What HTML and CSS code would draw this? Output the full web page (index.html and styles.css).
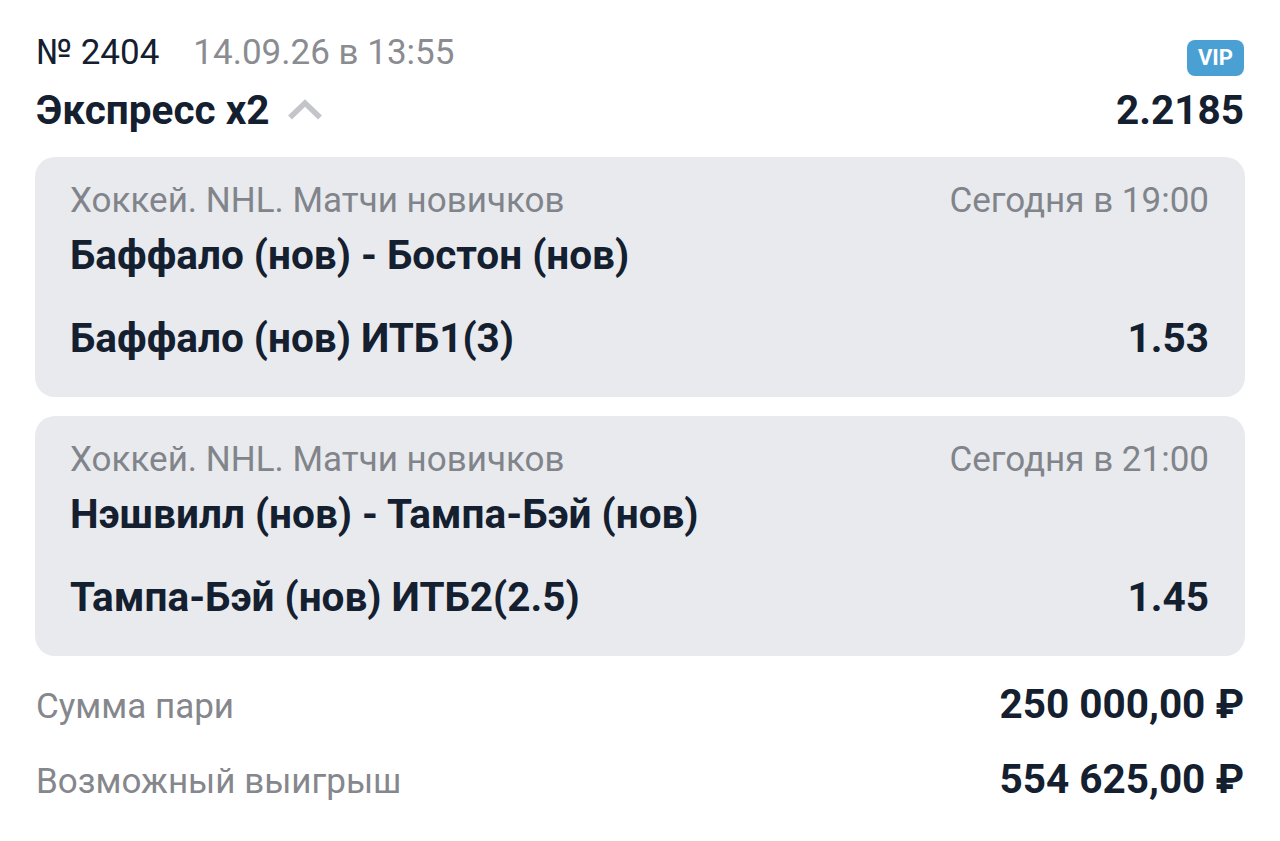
FILE: index.html
```html
<!DOCTYPE html>
<html lang="ru">
<head>
<meta charset="utf-8">
<title>Ставка № 2404</title>
<link rel="stylesheet" href="styles.css">
</head>
<body>
<main class="bet">
  <header class="bet-head">
    <div class="head-row meta-row">
      <div class="meta">
        <span class="num">№ 2404</span>
        <span class="date">14.09.26 в 13:55</span>
      </div>
      <span class="vip">VIP</span>
    </div>
    <div class="head-row title-row">
      <div class="title">
        <span>Экспресс x2</span>
        <svg class="chev" width="36" height="22" viewBox="0 0 36 22" aria-hidden="true">
          <path d="M3 19.5 L18 5 L33 19.5" fill="none" stroke="#c3c5c9" stroke-width="5.5" stroke-linecap="butt" stroke-linejoin="miter"/>
        </svg>
      </div>
      <span class="total">2.2185</span>
    </div>
  </header>

  <section class="event">
    <div class="ev-top">
      <span class="league">Хоккей. NHL. Матчи новичков</span>
      <span class="time">Сегодня в 19:00</span>
    </div>
    <div class="teams">Баффало (нов) - Бостон (нов)</div>
    <div class="pick">
      <span>Баффало (нов) ИТБ1(3)</span>
      <span>1.53</span>
    </div>
  </section>

  <section class="event">
    <div class="ev-top">
      <span class="league">Хоккей. NHL. Матчи новичков</span>
      <span class="time">Сегодня в 21:00</span>
    </div>
    <div class="teams">Нэшвилл (нов) - Тампа-Бэй (нов)</div>
    <div class="pick">
      <span>Тампа-Бэй (нов) ИТБ2(2.5)</span>
      <span>1.45</span>
    </div>
  </section>

  <div class="sums">
    <div class="sum-row">
      <span class="label">Сумма пари</span>
      <span class="value">250 000,00 ₽</span>
    </div>
    <div class="sum-row">
      <span class="label">Возможный выигрыш</span>
      <span class="value">554 625,00 ₽</span>
    </div>
  </div>
</main>
</body>
</html>
```

FILE: styles.css
```css
html, body {
  margin: 0;
  padding: 0;
  background: #ffffff;
}
body {
  font-family: Roboto, "Noto Sans", "Liberation Sans", sans-serif;
  color: #14202f;
}
.bet {
  padding: 31px 36px 0 35px;
  display: flex;
  flex-direction: column;
}
.head-row {
  display: flex;
  justify-content: space-between;
}
.meta-row {
  align-items: flex-start;
}
.meta {
  display: flex;
  align-items: baseline;
  gap: 34px;
  font-size: 35px;
  line-height: 44px;
  padding-left: 1px;
}
.num { color: #14202f; }
.date { color: #8a8c91; }
.vip {
  background: #4a9fd3;
  color: #ffffff;
  font-weight: 700;
  font-size: 22px;
  line-height: 36px;
  height: 36px;
  width: 57px;
  text-align: center;
  border-radius: 8px;
  margin-top: 9px;
  margin-right: 0;
}
.title-row {
  margin-top: 10px;
  align-items: center;
}
.title {
  display: flex;
  align-items: center;
  gap: 17px;
  font-size: 40.5px;
  font-weight: 700;
  line-height: 48px;
  padding-left: 1px;
}
.chev { margin-top: -2px; }
.total {
  font-size: 40.5px;
  font-weight: 700;
  line-height: 48px;
}
.event {
  margin-top: 23px;
  background: #e8eaee;
  border-radius: 20px;
  padding: 24px 36px 35px 35px;
  display: flex;
  flex-direction: column;
  margin-right: -1px;
}
.event + .event { margin-top: 19px; }
.ev-top {
  display: flex;
  justify-content: space-between;
  font-size: 35px;
  line-height: 40px;
  color: #81848a;
}
.teams {
  font-size: 40.5px;
  font-weight: 700;
  line-height: 48px;
  margin-top: 10px;
}
.pick {
  display: flex;
  justify-content: space-between;
  font-size: 40.5px;
  font-weight: 700;
  line-height: 48px;
  margin-top: 35px;
}
.sums {
  margin-top: 24px;
  display: flex;
  flex-direction: column;
  gap: 24px;
}
.sum-row {
  display: flex;
  justify-content: space-between;
  align-items: baseline;
  line-height: 48px;
}
.label {
  font-size: 35px;
  color: #85878c;
  padding-left: 1px;
}
.value {
  font-size: 40.5px;
  font-weight: 700;
}
```
